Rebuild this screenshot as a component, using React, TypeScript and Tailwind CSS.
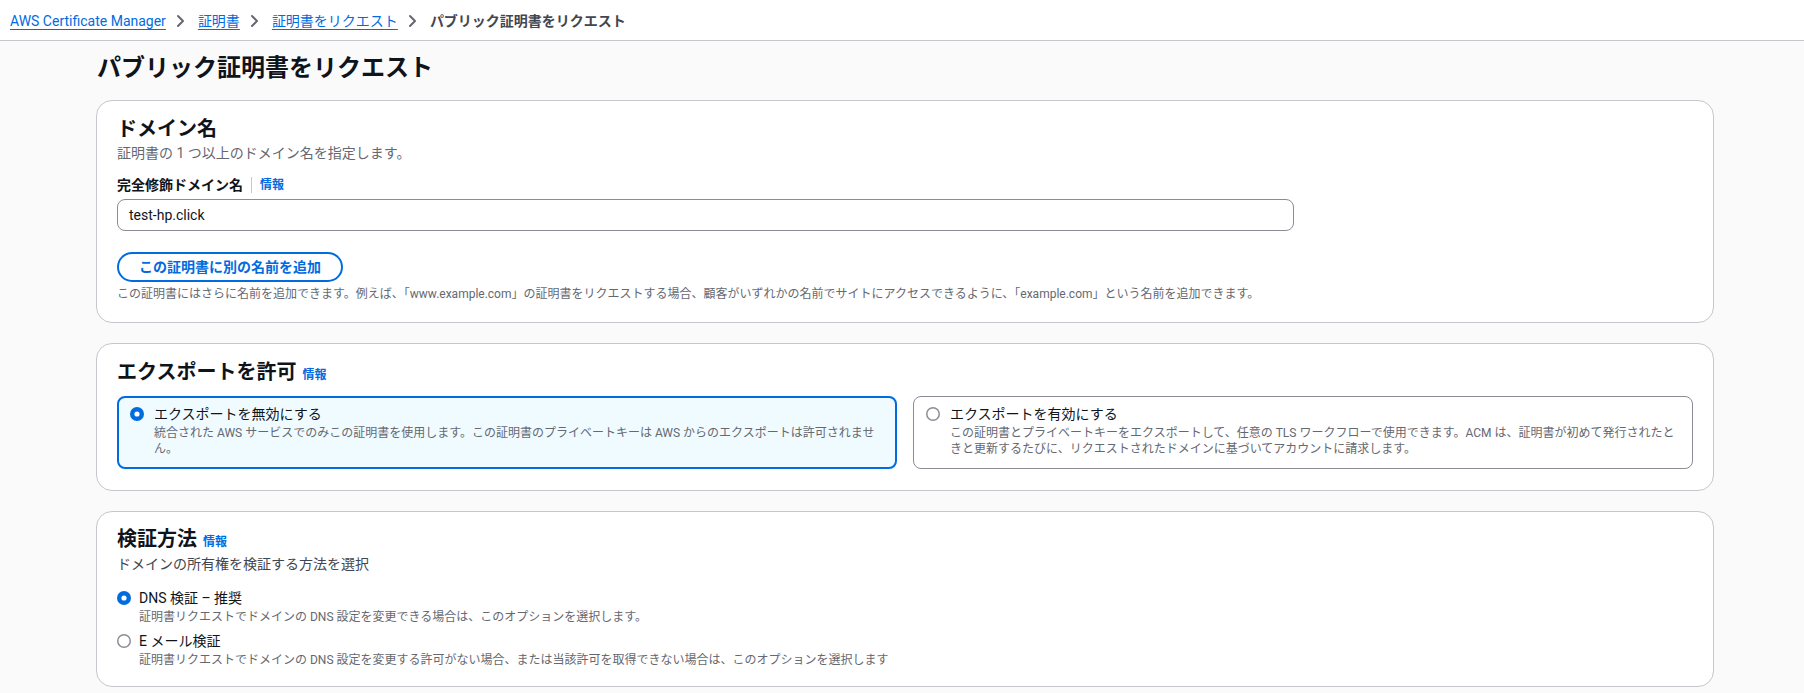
import React from "react";

const FONT = '"Roboto", "Noto Sans CJK JP", sans-serif';

function Chevron() {
  return (
    <svg width="16" height="16" viewBox="0 0 16 16" className="ml-[6px] mr-[10px] shrink-0">
      <path d="M6 3l5 5-5 5" fill="none" stroke="#656871" strokeWidth="2" strokeLinecap="round" strokeLinejoin="round" />
    </svg>
  );
}

function Radio({ checked }: { checked: boolean }) {
  return checked ? (
    <svg width="14" height="14" viewBox="0 0 14 14" className="shrink-0">
      <circle cx="7" cy="7" r="7" fill="#006ce0" />
      <circle cx="7" cy="7" r="2.6" fill="#ffffff" />
    </svg>
  ) : (
    <svg width="14" height="14" viewBox="0 0 14 14" className="shrink-0">
      <circle cx="7" cy="7" r="6.25" fill="#ffffff" stroke="#8c8c94" strokeWidth="1.5" />
    </svg>
  );
}

function Info() {
  return <span className="ml-[6px] text-[12px] leading-[16px] font-bold text-[#006ce0]">情報</span>;
}

export default function App() {
  return (
    <div className="min-h-screen bg-[#fafafa] text-[#0f141a]" style={{ fontFamily: FONT }}>
      {/* breadcrumb */}
      <div className="h-[41px] bg-white border-b border-[#c6c6cd] flex items-center pl-[10px] pt-[1px] text-[14px] leading-[20px]">
        <span className="text-[#006ce0] underline underline-offset-[3px]">AWS Certificate Manager</span>
        <Chevron />
        <span className="text-[#006ce0] underline underline-offset-[3px]">証明書</span>
        <Chevron />
        <span className="text-[#006ce0] underline underline-offset-[3px]">証明書をリクエスト</span>
        <Chevron />
        <span className="font-bold text-[#424650]">パブリック証明書をリクエスト</span>
      </div>

      <div className="ml-[96px] w-[1618px] pt-[12px]">
        <h1 className="text-[24px] leading-[30px] font-bold pl-[1px]">パブリック証明書をリクエスト</h1>

        <div className="mt-[17px] flex flex-col gap-[20px]">
          {/* card 1 */}
          <section className="bg-white border border-[#c6c6cd] rounded-[16px] px-[20px] pt-[16px] pb-[20px]">
            <h2 className="text-[20px] leading-[24px] font-bold">ドメイン名</h2>
            <p className="mt-[2px] text-[14px] leading-[20px] text-[#656871]">証明書の 1 つ以上のドメイン名を指定します。</p>
            <div className="mt-[12px] flex items-center text-[14px] leading-[20px]">
              <span className="font-bold">完全修飾ドメイン名</span>
              <span className="mx-[8px] w-px h-[16px] bg-[#c6c6cd]" />
              <span className="text-[12px] font-bold text-[#006ce0]">情報</span>
            </div>
            <div className="mt-[4px] w-[1177px] h-[32px] border border-[#8c8c94] rounded-[8px] flex items-center px-[11px] text-[14px]">
              test-hp.click
            </div>
            <button className="mt-[21px] h-[30px] px-[20px] border-2 border-[#006ce0] rounded-full text-[14px] leading-[20px] font-bold text-[#006ce0] bg-white">
              この証明書に別の名前を追加
            </button>
            <p className="mt-[4px] text-[12px] leading-[16px] text-[#656871]">
              この証明書にはさらに名前を追加できます。例えば、「www.example.com」の証明書をリクエストする場合、顧客がいずれかの名前でサイトにアクセスできるように、「example.com」という名前を追加できます。
            </p>
          </section>

          {/* card 2 */}
          <section className="bg-white border border-[#c6c6cd] rounded-[16px] px-[20px] pt-[16px] pb-[21px]">
            <div className="flex items-baseline">
              <h2 className="text-[20px] leading-[24px] font-bold">エクスポートを許可</h2>
              <Info />
            </div>
            <div className="mt-[12px] grid grid-cols-2 gap-[16px]">
              <div className="h-[73px] border-2 border-[#006ce0] bg-[#f0fbff] rounded-[8px] pl-[11px] pr-[8px] pt-[6px]">
                <div className="flex items-center gap-[10px] text-[14px] leading-[20px]">
                  <Radio checked />
                  <span>エクスポートを無効にする</span>
                </div>
                <p className="pl-[24px] mt-[1px] text-[12px] leading-[16px] text-[#656871]">
                  統合された AWS サービスでのみこの証明書を使用します。この証明書のプライベートキーは AWS からのエクスポートは許可されませ
                  <br />
                  ん。
                </p>
              </div>
              <div className="h-[73px] border border-[#8c8c94] bg-white rounded-[8px] pl-[12px] pr-[8px] pt-[7px]">
                <div className="flex items-center gap-[10px] text-[14px] leading-[20px]">
                  <Radio checked={false} />
                  <span>エクスポートを有効にする</span>
                </div>
                <p className="pl-[24px] mt-[1px] text-[12px] leading-[16px] text-[#656871]">
                  この証明書とプライベートキーをエクスポートして、任意の TLS ワークフローで使用できます。ACM は、証明書が初めて発行されたと
                  <br />
                  きと更新するたびに、リクエストされたドメインに基づいてアカウントに請求します。
                </p>
              </div>
            </div>
          </section>

          {/* card 3 */}
          <section className="bg-white border border-[#c6c6cd] rounded-[16px] px-[20px] pt-[15px] pb-[18px]">
            <div className="flex items-baseline">
              <h2 className="text-[20px] leading-[24px] font-bold">検証方法</h2>
              <Info />
            </div>
            <p className="mt-[3px] text-[14px] leading-[20px] text-[#424650]">ドメインの所有権を検証する方法を選択</p>
            <div className="mt-[14px] flex flex-col gap-[6px]">
              <div className="grid grid-cols-[14px_1fr] gap-x-[8px]">
                <div className="flex items-center h-[20px]">
                  <Radio checked />
                </div>
                <span className="text-[14px] leading-[20px]">DNS 検証 – 推奨</span>
                <span />
                <span className="mt-[1px] text-[12px] leading-[16px] text-[#656871]">
                  証明書リクエストでドメインの DNS 設定を変更できる場合は、このオプションを選択します。
                </span>
              </div>
              <div className="grid grid-cols-[14px_1fr] gap-x-[8px]">
                <div className="flex items-center h-[20px]">
                  <Radio checked={false} />
                </div>
                <span className="text-[14px] leading-[20px]">E メール検証</span>
                <span />
                <span className="mt-[1px] text-[12px] leading-[16px] text-[#656871]">
                  証明書リクエストでドメインの DNS 設定を変更する許可がない場合、または当該許可を取得できない場合は、このオプションを選択します
                </span>
              </div>
            </div>
          </section>
        </div>
      </div>
    </div>
  );
}
